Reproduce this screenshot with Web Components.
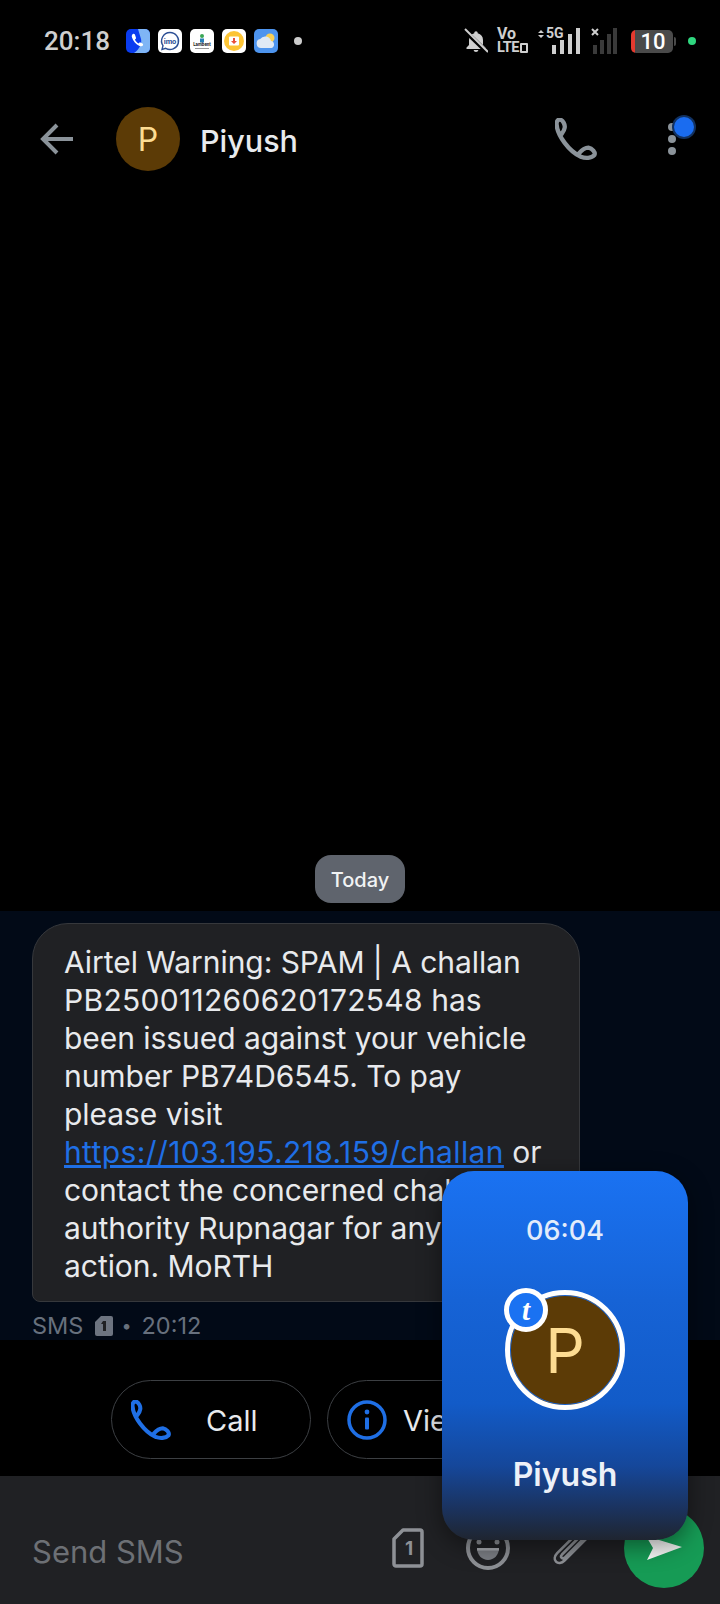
<!DOCTYPE html>
<html lang="en">
<head>
<meta charset="utf-8">
<title>Piyush</title>
<style>
  html, body { margin: 0; background: #000; }
  body { width: 720px; height: 1604px; position: relative; overflow: hidden; font-family: Inter, Roboto, sans-serif; }
  .page { display: flex; flex-direction: column; height: 100%; }
  .grow { flex: 1; }
  message-bubble span { letter-spacing: .3px; }
</style>
</head>
<body>
<div class="page">
  <status-bar></status-bar>
  <chat-header name="Piyush"></chat-header>
  <div class="grow"></div>
  <date-chip>Today</date-chip>
  <message-band>
    <message-bubble>Airtel Warning: SPAM | A challan <span>PB250011260620172548</span> has been issued against your vehicle number PB74D6545. To pay please visit <a>https://103.195.218.159/challan</a> or contact the concerned challan authority Rupnagar for any<br>action. MoRTH</message-bubble>
  </message-band>
  <action-row>
    <action-chip label="Call" icon="call"></action-chip>
    <action-chip label="View" icon="info"></action-chip>
  </action-row>
  <compose-bar></compose-bar>
</div>
<call-bubble time="06:04" name="Piyush"></call-bubble>

<script>
const PHONE = `<path d="M1.500 6C1.200 3 3 1 5 1.500 7.500 2.500 9.500 6 9 9 8.700 11.500 7.500 13 6 15M1.500 6C2 16 13 31 24 36M24 36C28 37.500 34 37.500 36.500 34.500 38 32 34.500 28 31 27.500 28 27.500 25 29.500 22 33" fill="none" stroke="currentColor" stroke-width="4" stroke-linecap="round" stroke-linejoin="round"/>`;

class LetterAvatar extends HTMLElement {
  constructor() {
    super();
    this.attachShadow({ mode: 'open' }).innerHTML = `
      <style>
        :host { display: flex; align-items: center; justify-content: center; width: var(--size, 64px); height: var(--size, 64px); border-radius: 50%; background: #5c3b06; color: #fddc92; font: 400 var(--letter, 32px) Inter, sans-serif; flex: none; box-sizing: border-box; }
      </style><slot></slot>`;
  }
}

class StatusBar extends HTMLElement {
  constructor() {
    super();
    this.attachShadow({ mode: 'open' }).innerHTML = `
      <style>
        :host { display: flex; align-items: center; height: 82px; padding: 0 24px 0 44px; color: #cfcfcf; font-family: Roboto, sans-serif; box-sizing: border-box; }
        .time { font-size: 26px; font-weight: 500; width: 82px; }
        .apps { display: flex; gap: 8px; }
        .app { width: 24px; height: 24px; border-radius: 5px; background: #fff; overflow: hidden; display: block; }
        .app text { font-family: Roboto, sans-serif; }
        .dot { width: 8px; height: 8px; border-radius: 50%; background: #ccc; margin-left: 16px; }
        .right { margin-left: auto; display: flex; align-items: center; }
        .volte { display: flex; flex-direction: column; margin: 0 0 0 9px; font-weight: 700; width: 32px; }
        .vo { font-size: 16px; line-height: 14px; }
        .lte { display: flex; align-items: center; font-size: 14.500px; line-height: 14px; letter-spacing: -.5px; }
        .lte i { display: block; box-sizing: border-box; width: 8px; height: 10px; border: 2px solid #cfcfcf; margin-left: 1px; border-radius: 1px; }
        .fiveg { position: relative; width: 42px; height: 26px; margin-left: 9px; }
        .fiveg b { position: absolute; left: 8px; top: -2px; font-size: 14px; line-height: 14px; font-weight: 700; }
        .bars { display: block; }
        .batt { position: relative; margin-left: 14px; width: 42px; height: 23px; display: flex; align-items: center; justify-content: center; border-radius: 5px; background: linear-gradient(to right, #e53a2f 4px, #4a4a4a 4px); color: #fff; font-size: 22px; font-weight: 500; padding-left: 2px; box-sizing: border-box; }
        .batt::after { content: ''; position: absolute; right: -3px; top: 7px; width: 2px; height: 9px; background: #4a4a4a; border-radius: 0 2px 2px 0; }
        .green { width: 8px; height: 8px; border-radius: 50%; background: #2fd77f; margin-left: 15px; }
      </style>
      <span class="time">20:18</span>
      <div class="apps">
        <svg class="app" viewBox="0 0 24 24" style="background:#0a3cf0"><path d="M12 0h12v24H8c6-4 8-10 7-14z" fill="#7fb5f5"/><path d="M7 5c-1.200.6-1.500 2-1 3.500 1 3.500 4 7 7.500 8.500 1.500.6 3 .4 3.500-.7.3-.7 0-1.300-.6-1.700l-1.800-1c-.6-.3-1.200-.2-1.600.3l-.5.6c-1.500-.8-2.900-2.300-3.600-3.900l.7-.5c.5-.4.600-1 .3-1.600L8.900 5.500C8.500 4.800 7.700 4.600 7 5z" fill="#fff"/></svg>
        <svg class="app" viewBox="0 0 24 24"><path d="M12 3.500a8.500 8.500 0 1 1-4.300 15.800L4 20.500l1-3.800A8.500 8.500 0 0 1 12 3.500z" fill="none" stroke="#2c4f95" stroke-width="1.400"/><text x="12" y="14.500" font-size="7.500" font-weight="700" text-anchor="middle" fill="#2c4f95">imo</text></svg>
        <svg class="app" viewBox="0 0 24 24"><circle cx="12" cy="7" r="2" fill="#3aa655"/><path d="M10 9.500h4v4h-4z" fill="#2a7fb8"/><text x="12" y="16.500" font-size="4.500" font-weight="700" text-anchor="middle" fill="#222">Lambent</text><rect x="5" y="19" width="14" height="1" fill="#999"/></svg>
        <svg class="app" viewBox="0 0 24 24"><circle cx="12" cy="12" r="10" fill="#fcc435"/><path d="M8 7.500h8a1 1 0 0 1 1 1v7a1 1 0 0 1-1 1H8a1 1 0 0 1-1-1v-7a1 1 0 0 1 1-1z" fill="#fff"/><path d="M11 9h2v3h2l-3 3-3-3h2z" fill="#e8503a"/></svg>
        <svg class="app" viewBox="0 0 24 24" style="background:#4d94ee"><circle cx="16" cy="9" r="4.500" fill="#f8cf55"/><path d="M7 19a4.500 4.500 0 0 1-.8-8.900A6 6 0 0 1 17 12a3.600 3.600 0 0 1 .5 7z" fill="#dfe9f5"/></svg>
      </div>
      <span class="dot"></span>
      <div class="right">
        <svg width="24" height="26" viewBox="0 0 24 24" fill="#cfcfcf"><path d="M12 23c1.300 0 2.300-.9 2.300-2h-4.600c0 1.100 1 2 2.300 2zm7-7v-5c0-3.300-1.900-6-5.300-6.700V4c0-1-.7-1.800-1.700-1.800s-1.700.8-1.700 1.800v.3C6.900 5 5 7.700 5 11v5l-2.500 2.500V20h19v-1.500z"/><path d="M0 1l24 23" stroke="#000" stroke-width="4.500"/><path d="M1 0l23 23" stroke="#cfcfcf" stroke-width="2"/></svg>
        <div class="volte"><span class="vo">Vo</span><span class="lte">LTE<i></i></span></div>
        <div class="fiveg">
          <svg class="bars" width="42" height="26" viewBox="0 0 42 26" fill="#cfcfcf"><path d="M0 5l3-3 3 3zM0 7h6l-3 3z"/><rect x="14" y="17" width="4" height="9"/><rect x="22" y="12" width="4" height="14"/><rect x="30" y="6" width="4" height="20"/><rect x="38" y="0" width="4" height="26"/></svg>
          <b>5G</b>
        </div>
        <svg style="margin-left:11px" width="26" height="26" viewBox="0 0 26 26" fill="#3a3a3a"><path d="M1 1l6 6M7 1L1 7" stroke="#cfcfcf" stroke-width="2"/><rect x="2" y="17" width="4" height="9"/><rect x="9" y="12" width="4" height="14"/><rect x="16" y="6" width="4" height="20"/><rect x="22" y="0" width="4" height="26"/></svg>
        <div class="batt">10</div>
        <span class="green"></span>
      </div>`;
  }
}

class ChatHeader extends HTMLElement {
  constructor() {
    super();
    const name = this.getAttribute('name');
    this.attachShadow({ mode: 'open' }).innerHTML = `
      <style>
        :host { display: flex; align-items: center; height: 114px; padding: 0 32px 0 40px; color: #8b939a; box-sizing: border-box; }
        letter-avatar { margin-left: 43px; }
        .name { margin: 2px 0 0 20px; color: #e8eaed; font: 500 30.500px Inter, sans-serif; }
        .right { margin-left: auto; display: flex; align-items: center; }
        .more { position: relative; width: 8px; height: 32px; margin: 0 12px 0 71px; display: flex; flex-direction: column; justify-content: space-between; }
        .more i { display: block; width: 8px; height: 8px; border-radius: 50%; background: currentColor; }
        .badge { position: absolute; left: 6px; top: -6px; width: 20px; height: 20px; border-radius: 50%; background: #1a6cf0; box-shadow: 0 0 0 2px #12315f; }
      </style>
      <svg width="33" height="32" viewBox="0 0 33 32" fill="none" stroke="currentColor" stroke-width="4"><path d="M17 2L3 16l14 14M3 16h30"/></svg>
      <letter-avatar>P</letter-avatar>
      <span class="name">${name}</span>
      <div class="right">
        <svg width="42" height="42" viewBox="0 0 39 39">${PHONE}</svg>
        <div class="more"><i></i><i></i><i></i><span class="badge"></span></div>
      </div>`;
  }
}

class DateChip extends HTMLElement {
  constructor() {
    super();
    this.attachShadow({ mode: 'open' }).innerHTML = `
      <style>
        :host { display: flex; align-self: center; align-items: center; justify-content: center; width: 90px; height: 48px; padding-top: 2px; box-sizing: border-box; margin-bottom: 8px; border-radius: 16px; background: #5f646d; color: #f1f3f4; font: 500 20px Inter, sans-serif; }
      </style><slot></slot>`;
  }
}

class MessageBand extends HTMLElement {
  constructor() {
    super();
    this.attachShadow({ mode: 'open' }).innerHTML = `
      <style>
        :host { display: block; height: 429px; padding: 12px 0 0 32px; background: #020a17; box-sizing: border-box; }
      </style><slot></slot>`;
  }
}

class MessageBubble extends HTMLElement {
  constructor() {
    super();
    this.attachShadow({ mode: 'open' }).innerHTML = `
      <style>
        :host { display: block; width: 548px; box-sizing: border-box; }
        .box { box-sizing: border-box; height: 379px; padding: 19px 30px 0 31px; background: #202124; border: 1.500px solid #36383c; border-radius: 36px 36px 36px 8px; color: #e8eaed; font: 400 30px/38px Inter, sans-serif; letter-spacing: -.05px; }
        ::slotted(a) { color: #1f6fe5; text-decoration: underline; letter-spacing: .38px; }
        .meta { display: flex; align-items: center; margin-top: 10px; color: #67707d; font: 400 23.500px/28px Inter, sans-serif; }
        .sim { margin: 0 8px 0 12px; }
        .sep { margin-right: 10px; font-size: 18px; }
      </style>
      <div class="box"><slot></slot></div>
      <div class="meta">SMS
        <svg class="sim" width="18" height="20" viewBox="0 0 18 20"><path d="M6 0h10a2 2 0 0 1 2 2v16a2 2 0 0 1-2 2H2a2 2 0 0 1-2-2V6z" fill="#6d7480"/><path d="M8 5h3v10H8V8H6z" fill="#202124"/></svg>
        <span class="sep">•</span>20:12</div>`;
  }
}

class ActionRow extends HTMLElement {
  constructor() {
    super();
    this.attachShadow({ mode: 'open' }).innerHTML = `
      <style>
        :host { display: flex; gap: 16px; height: 136px; padding: 40px 0 0 111px; box-sizing: border-box; }
      </style><slot></slot>`;
  }
}

class ActionChip extends HTMLElement {
  constructor() {
    super();
    const info = this.getAttribute('icon') === 'info';
    const icon = info
      ? `<svg width="40" height="40" viewBox="0 0 40 40"><circle cx="20" cy="20" r="18" fill="none" stroke="currentColor" stroke-width="3.500"/><rect x="18" y="17.500" width="4" height="12" rx="1" fill="currentColor"/><circle cx="20" cy="12" r="2.400" fill="currentColor"/></svg>`
      : `<svg width="40" height="40" viewBox="0 0 39 39">${PHONE}</svg>`;
    this.attachShadow({ mode: 'open' }).innerHTML = `
      <style>
        :host { display: flex; align-items: center; width: ${info ? 240 : 200}px; height: 79px; padding-left: 19px; border: 1.500px solid #3c3f43; border-radius: 40px; box-sizing: border-box; color: #1f6fe5; flex: none; }
        span { margin: 1px 0 0 ${info ? 16 : 35}px; color: #e8eaed; font: 400 29px Inter, sans-serif; }
      </style>
      ${icon}<span>${this.getAttribute('label')}</span>`;
  }
}

class ComposeBar extends HTMLElement {
  constructor() {
    super();
    this.attachShadow({ mode: 'open' }).innerHTML = `
      <style>
        :host { display: flex; align-items: center; height: 128px; padding: 32px 16px 16px 32px; background: #202124; box-sizing: border-box; color: #8e9196; }
        .hint { color: #6d7075; font: 400 31px Inter, sans-serif; margin-top: 6px; }
        .icons { margin-left: auto; display: flex; align-items: center; }
        .simi { display: block; margin-right: 42px; }
        .simi text { font-family: Inter, sans-serif; }
        .smile { margin-right: 43px; }
        .clip { margin-right: 35px; }
        .send { width: 80px; height: 80px; border-radius: 50%; background: #169b55; display: flex; align-items: center; justify-content: center; }
      </style>
      <span class="hint">Send SMS</span>
      <div class="icons">
        <svg class="simi" width="32" height="40" viewBox="0 0 32 40"><path d="M11 2h17a2 2 0 0 1 2 2v32a2 2 0 0 1-2 2H4a2 2 0 0 1-2-2V11z" fill="none" stroke="currentColor" stroke-width="3.500" stroke-linejoin="round"/><text x="17" y="27" font-size="19" font-weight="700" text-anchor="middle" fill="currentColor">1</text></svg>
        <svg class="smile" width="44" height="44" viewBox="0 0 44 44"><circle cx="22" cy="22" r="20" fill="none" stroke="currentColor" stroke-width="4"/><circle cx="13" cy="16" r="2.500" fill="currentColor"/><circle cx="31" cy="16" r="2.500" fill="currentColor"/><path d="M11 22h22c0 7-5 12-11 12S11 29 11 22z" fill="#7b7e84"/><rect x="11" y="22" width="22" height="2.500" fill="#a9acb1"/></svg>
        <svg class="clip" width="36" height="36" viewBox="0 0 36 36" fill="none" stroke="currentColor" stroke-width="2.600" stroke-linecap="round"><path d="M33 9 11.500 30.500c-3 3-6.500 3.200-8.500 1.200s-1.600-5.500 1.200-8.500L24 3.500c2-2 4.700-2 6.300-.4s1.600 4 0 5.800L12 27.500c-1 1-2.500 1.200-3.300.4s-.7-2.300.3-3.400L26 7.500"/></svg>
        <div class="send">
          <svg width="36" height="24" viewBox="0 0 36 24"><defs><linearGradient id="g" x1="0" y1="0" x2="1" y2="0"><stop offset="0" stop-color="#fff"/><stop offset="1" stop-color="#e3e6e4"/></linearGradient></defs><path d="M0 0l36 11L1 24l6-12z" fill="url(#g)"/></svg>
        </div>
      </div>`;
  }
}

class CallBubble extends HTMLElement {
  constructor() {
    super();
    this.attachShadow({ mode: 'open' }).innerHTML = `
      <style>
        :host { position: absolute; left: 442px; top: 1171px; width: 246px; height: 369px; display: flex; flex-direction: column; align-items: center; box-sizing: border-box; padding-top: 43px; border-radius: 32px; background: linear-gradient(to bottom, #1a72f2 0%, #1663d6 35%, #125bc8 63%, #15479a 80%, #1a3566 90%, #1f2530 100%); box-shadow: 0 6px 24px rgba(0,0,0,.45); color: #e2ecfb; }
        .time { font: 500 27px/34px Inter, sans-serif; }
        .pic { position: relative; margin-top: 42px; --size: 120px; --letter: 62px; }
        letter-avatar { border: 5px solid #fff; box-shadow: inset 0 0 0 1px #1663d6; }
        .badge { position: absolute; left: -1px; top: -2px; width: 44px; height: 44px; box-sizing: border-box; border-radius: 50%; border: 5px solid #fff; background: #1a72f2; color: #fff; display: flex; align-items: center; justify-content: center; font: italic 700 29px "Liberation Serif", serif; }
        .name { margin-top: 45px; color: #edf1f8; font: 600 32px/40px Inter, sans-serif; }
      </style>
      <div class="time">${this.getAttribute('time')}</div>
      <div class="pic"><letter-avatar>P</letter-avatar><span class="badge">t</span></div>
      <div class="name">${this.getAttribute('name')}</div>`;
  }
}

customElements.define('letter-avatar', LetterAvatar);
customElements.define('status-bar', StatusBar);
customElements.define('chat-header', ChatHeader);
customElements.define('date-chip', DateChip);
customElements.define('message-band', MessageBand);
customElements.define('message-bubble', MessageBubble);
customElements.define('action-row', ActionRow);
customElements.define('action-chip', ActionChip);
customElements.define('compose-bar', ComposeBar);
customElements.define('call-bubble', CallBubble);
</script>
</body>
</html>
